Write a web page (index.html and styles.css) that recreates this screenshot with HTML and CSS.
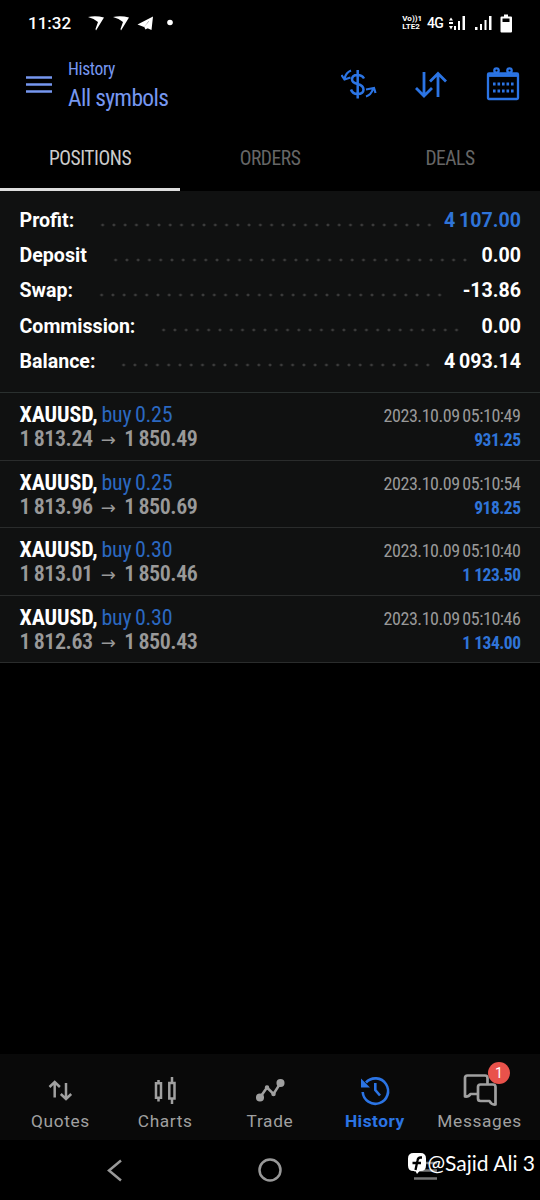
FILE: index.html
```html
<!DOCTYPE html>
<html lang="en">
<head>
  <meta charset="UTF-8">
  <title>History</title>
  <link rel="stylesheet" href="styles.css">
</head>
<body>

<div class="status">
  <span class="clock">11:32</span>
  <svg width="90" height="20" viewBox="0 0 90 20" fill="#fff">
    <path d="M1 4Q9 2.500 17 4.500L9 17.500L8.500 16L11 9Q7 5.500 1 4Z"/>
    <path d="M26 4Q34 2.500 42 4.500L34 17.500L33.500 16L36 9Q32 5.500 26 4Z"/>
    <path d="M50.500 11.500L66 3.500L64.500 17L60 15L62 8L57 14Z"/>
    <path d="M57 13.500L63 7.500L61 15L58.500 16.500Z"/>
    <circle cx="83" cy="9.500" r="2.800"/>
  </svg>
  <span class="volte"><span>Vo))1</span><span>LTE2</span></span>
  <span class="net">4G</span>
  <svg width="65" height="20" viewBox="0 0 65 20" fill="#fff">
    <path d="M3 4.500L5 7.500H1ZM1 9h4v2H1ZM1 13h4l-2 3.500ZM6 13h2v4H6ZM10 8h2v9h-2ZM14.500 3h2.500v14h-2.500ZM27 14h2.500v3h-2.500ZM32 11h2v6h-2ZM36.500 7h2v10h-2ZM41 3h2.500v14h-2.500Z"/>
    <path fill-rule="evenodd" d="M56 1.500h4v2h3q1 0 1 1V18.500q0 1-1 1h-9.500q-1 0-1-1V4.500q0-1 1-1H56ZM54.500 5.500v3.500h7V5.500Z"/>
  </svg>
</div>

<header class="header">
  <svg class="menu" width="26" height="20" viewBox="0 0 26 20" stroke="#7697f0" stroke-width="2.500">
    <path d="M0 2.500h26M0 9.500h26M0 16.500h26"/>
  </svg>
  <div class="title">
    <span class="small">History</span>
    <span class="big">All symbols</span>
  </div>
  <svg class="money" width="36" height="32" viewBox="0 0 36 32" fill="none" stroke="#2b74e4" stroke-width="2.500">
    <path d="M16.700 2v28.500M23 10.500q-2-3.500-6.500-3.500q-5.500 0-5.500 4.500q0 3 5.500 4.500q6 1.500 6 5.500q0 4.500-6 4.500q-5 0-6.500-4.500"/>
    <path stroke-width="2.200" d="M10 2.500q-5 2-6.500 8M0.500 7l3 4.500l6-2M25 28.500q5-1.500 7-7.500M25 21.500l8-1.500l1.500 5"/>
  </svg>
  <svg class="sort" width="32" height="28" viewBox="0 0 32 28" fill="none" stroke="#2b74e4" stroke-width="2.800">
    <path d="M9 1v23.500M1 17l8 8l8-8M23 26V3M15 10.500l8-8l8 8"/>
  </svg>
  <svg class="calendar" width="34" height="34" viewBox="0 0 34 34" fill="none" stroke="#2b74e4" stroke-width="2.300">
    <rect x="2" y="6.500" width="30" height="25.500" rx="1"/>
    <path d="M2 8.500h30" stroke-width="2.800"/>
    <circle cx="10.500" cy="3.500" r="2.200"/><circle cx="23.500" cy="3.500" r="2.200"/>
    <path d="M7 17h21M7 24h21" stroke-width="3" stroke-dasharray="2.600 1.900"/>
  </svg>
</header>

<nav class="tabs">
  <div class="tab active"><span>POSITIONS</span></div>
  <div class="tab"><span>ORDERS</span></div>
  <div class="tab"><span>DEALS</span></div>
</nav>

<section class="summary">
  <div class="line"><b>Profit:</b><i></i><b class="blue">4 107.00</b></div>
  <div class="line"><b>Deposit</b><i></i><b>0.00</b></div>
  <div class="line"><b>Swap:</b><i class="short"></i><b>-13.86</b></div>
  <div class="line"><b>Commission:</b><i class="short"></i><b>0.00</b></div>
  <div class="line"><b>Balance:</b><i></i><b>4 093.14</b></div>
</section>

<main class="deals">
  <div class="deal">
    <div class="left"><div class="symbol"><b>XAUUSD,</b> <span>buy 0.25</span></div><div class="price">1 813.24<em>→</em>1 850.49</div></div>
    <div class="right"><div class="date">2023.10.09 05:10:49</div><div class="gain">931.25</div></div>
  </div>
  <div class="deal">
    <div class="left"><div class="symbol"><b>XAUUSD,</b> <span>buy 0.25</span></div><div class="price">1 813.96<em>→</em>1 850.69</div></div>
    <div class="right"><div class="date">2023.10.09 05:10:54</div><div class="gain">918.25</div></div>
  </div>
  <div class="deal">
    <div class="left"><div class="symbol"><b>XAUUSD,</b> <span>buy 0.30</span></div><div class="price">1 813.01<em>→</em>1 850.46</div></div>
    <div class="right"><div class="date">2023.10.09 05:10:40</div><div class="gain">1 123.50</div></div>
  </div>
  <div class="deal">
    <div class="left"><div class="symbol"><b>XAUUSD,</b> <span>buy 0.30</span></div><div class="price">1 812.63<em>→</em>1 850.43</div></div>
    <div class="right"><div class="date">2023.10.09 05:10:46</div><div class="gain">1 134.00</div></div>
  </div>
</main>

<nav class="bottom">
  <div class="item">
    <svg width="36" height="36" viewBox="0 0 36 36" fill="none" stroke="#a0a0a0" stroke-width="2.500">
      <path d="M12.700 25.500V10M7.500 15l5.200-5l5.200 5M24 11v16M18.800 22l5.200 5l5.200-5"/>
    </svg>
    <span>Quotes</span>
  </div>
  <div class="item">
    <svg width="36" height="36" viewBox="0 0 36 36" fill="none" stroke="#a0a0a0" stroke-width="2.500">
      <path d="M9 11.200h5v14.600h-5ZM11.500 8v3M11.500 26v3.500M22.300 11h5.200v15.500h-5.200ZM25 5v6M25 26.500v5.500"/>
    </svg>
    <span>Charts</span>
  </div>
  <div class="item">
    <svg width="36" height="36" viewBox="0 0 36 36" fill="#a0a0a0" stroke="#a0a0a0" stroke-width="2.500">
      <path fill="none" d="M8 25.500l7-10l6.500 6.500l7-11"/>
      <circle cx="8" cy="25.500" r="2.800"/><circle cx="15" cy="15.500" r="1"/><circle cx="21.500" cy="22" r="1"/><circle cx="28.500" cy="11" r="2.800"/>
    </svg>
    <span>Trade</span>
  </div>
  <div class="item on">
    <svg width="36" height="36" viewBox="0 0 36 36" fill="none" stroke="#2b74e4" stroke-width="2.600">
      <path d="M9 10.500A12.700 12.700 0 1 1 5.700 20"/>
      <path d="M4 6.500v9h9Z" fill="#2b74e4" stroke="none"/>
      <path d="M18.300 11v7l4.700 5.500"/>
    </svg>
    <span>History</span>
  </div>
  <div class="item">
    <svg width="36" height="36" viewBox="0 0 36 36" fill="none" stroke="#a0a0a0" stroke-width="2.700" stroke-linejoin="round">
      <path d="M15.500 22H8.500q-2 3-5.500 2.500V6q0-2.500 2.500-2.500H23q2.500 0 2.500 2.500v6"/>
      <path d="M18.500 12.500h12.500q2.500 0 2.500 2.500v17.500q-4 .5-6-3.500H18.500q-2.500 0-2.500-2.500V15q0-2.500 2.500-2.500Z"/>
    </svg>
    <span>Messages</span>
    <div class="badge">1</div>
  </div>
</nav>

<footer class="system">
  <svg width="22" height="24" viewBox="0 0 22 24" fill="none" stroke="#999" stroke-width="2.500"><path d="M16 2.500L4 12.500l12 10"/></svg>
  <svg width="26" height="26" viewBox="0 0 26 26" fill="none" stroke="#999" stroke-width="2.500"><circle cx="13" cy="13" r="10.500"/></svg>
  <svg width="24" height="24" viewBox="0 0 24 24" fill="none" stroke="#777" stroke-width="2.500"><path d="M1 5h23M1 12.500h23M1 20.500h23"/></svg>
  <div class="mark">
    <svg width="20" height="23" viewBox="0 0 20 23">
      <path fill="#fff" d="M6.500 1h7q5.500 0 5.500 5.500v7q0 5.500-5.500 5.500h-1l-2.500 3-1.500-3H6.500q-5.500 0-5.500-5.500v-7q0-5.500 5.500-5.500Z"/>
      <path fill="none" stroke="#000" stroke-width="2.300" d="M15 5.500h-1.500q-2.500 0-3 3L8.500 18M5.500 11h8.500"/>
    </svg>
    <span>@Sajid Ali 3</span>
  </div>
</footer>

</body>
</html>
```
FILE: styles.css
```css
* {
  box-sizing: border-box;
}
body {
  margin: 0;
  width: 540px;
  height: 1200px;
  background: #000;
  color: #fff;
  font-family: "Roboto Condensed", Roboto, sans-serif;
  font-stretch: condensed;
  display: flex;
  flex-direction: column;
  overflow: hidden;
}
svg {
  display: block;
  flex: none;
}
span, b, .price, .date, .gain {
  white-space: nowrap;
}
.status {
  height: 46px;
  padding: 0 27px 0 28px;
  display: flex;
  align-items: center;
  font-family: Roboto, sans-serif;
  font-stretch: normal;
}
.clock {
  font-size: 17px;
  font-weight: 500;
  width: 59px;
}
.volte {
  margin-left: auto;
  display: flex;
  flex-direction: column;
  font-size: 8px;
  line-height: 8px;
  font-weight: 700;
}
.net {
  font-size: 14px;
  font-weight: 500;
  letter-spacing: -0.800px;
  margin: 0 5px 0 5px;
}
.header {
  height: 79px;
  padding: 0 20px 0 26px;
  display: flex;
}
.menu {
  margin-top: 29px;
}
.title {
  margin: 12px auto 0 16px;
  display: flex;
  flex-direction: column;
  color: #7697f0;
}
.small {
  font-size: 17.500px;
  line-height: 23px;
  letter-spacing: -0.350px;
}
.big {
  font-size: 23.500px;
  line-height: 34px;
  letter-spacing: -0.650px;
}
.money {
  margin: 22px 38px 0 0;
}
.sort {
  margin: 25px 39px 0 0;
}
.calendar {
  margin-top: 21px;
}
.tabs {
  height: 66px;
  display: flex;
}
.tab {
  flex: 1;
  padding-top: 3px;
  display: flex;
  justify-content: center;
  align-items: center;
  font-size: 19.500px;
  letter-spacing: -0.450px;
  color: #666;
  border-bottom: 3px solid transparent;
}
.active {
  color: #ccc;
  border-color: #ddd;
}
.summary {
  height: 202px;
  padding: 12px 19px 0 19.500px;
  background: #101111;
  border-bottom: 1px solid #2a302f;
  font-family: Roboto, sans-serif;
  font-stretch: normal;
}
.line {
  height: 35.200px;
  display: flex;
  align-items: center;
  font-size: 19.600px;
  word-spacing: -1px;
}
.line i {
  flex: 1;
  height: 4px;
  margin: 8px 8px 0 23px;
  background: radial-gradient(circle, #3c3c3c 1.200px, transparent 1.700px) 0 0 / 11.270px 4px;
}
.line .short {
  margin-right: 17px;
}
.blue, .gain {
  color: #2f74d8;
}
.deal {
  height: 67.500px;
  padding: 10px 19.500px 0;
  display: flex;
  justify-content: space-between;
  background: #101111;
  border-bottom: 1px solid #2a2c2c;
}
.symbol {
  font-size: 22px;
  line-height: 24px;
  letter-spacing: -0.100px;
  word-spacing: -1px;
}
.symbol span {
  color: #2b68c0;
  letter-spacing: -0.300px;
}
.price {
  font-size: 22px;
  line-height: 24px;
  height: 24px;
  font-weight: 600;
  letter-spacing: -0.450px;
  word-spacing: -1px;
  color: #999;
}
.price em {
  display: inline-block;
  margin: 0 9px 0 8px;
  font: 18px/20px "DejaVu Sans", sans-serif;
}
.right {
  text-align: right;
}
.date {
  font-size: 18px;
  line-height: 26px;
  letter-spacing: -0.450px;
  word-spacing: -1px;
  color: #999;
}
.gain {
  font-size: 17.500px;
  line-height: 22px;
  font-weight: 700;
  letter-spacing: -0.500px;
}
.bottom {
  margin-top: auto;
  height: 86px;
  padding: 0 8px;
  display: flex;
  background: #090909;
  font-family: Roboto, sans-serif;
  font-stretch: normal;
}
.item {
  flex: 1;
  position: relative;
  padding-top: 18px;
  display: flex;
  flex-direction: column;
  align-items: center;
  color: #a0a0a0;
  font-size: 17.300px;
  line-height: 26px;
  letter-spacing: 0.650px;
}
.on {
  color: #2b74e4;
  font-weight: 700;
  letter-spacing: 0.500px;
}
.badge {
  position: absolute;
  left: 61px;
  top: 8px;
  width: 22px;
  height: 22px;
  border-radius: 50%;
  background: #e9524b;
  color: #fff;
  font-size: 14px;
  line-height: 22px;
  text-align: center;
}
.system {
  position: relative;
  height: 60px;
  padding: 0 103px 0 105px;
  display: flex;
  justify-content: space-between;
  align-items: center;
}
.mark {
  position: absolute;
  right: 5px;
  top: 11px;
  display: flex;
  align-items: center;
  gap: 1px;
  font: 21px/24px Lato, sans-serif;
}
```
